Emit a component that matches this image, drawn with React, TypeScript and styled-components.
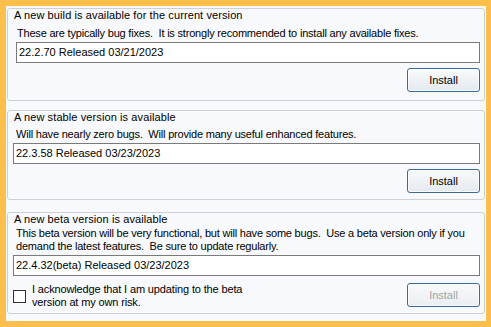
import React from 'react';
import styled, { createGlobalStyle } from 'styled-components';

const GlobalStyle = createGlobalStyle`
  html, body {
    margin: 0;
    padding: 0;
    background: #ffffff;
  }
  * {
    box-sizing: border-box;
  }
`;

interface Update {
  title: string;
  description: string;
  version: string;
  height: number;
  gapTop: number;
  descGap: number;
  wide?: boolean;
  beta?: boolean;
}

const updates: Update[] = [
  {
    title: 'A new build is available for the current version',
    description:
      'These are typically bug fixes.  It is strongly recommended to install any available fixes.',
    version: '22.2.70 Released 03/21/2023',
    height: 93,
    gapTop: 2,
    descGap: 5,
    wide: true,
  },
  {
    title: 'A new stable version is available',
    description: 'Will have nearly zero bugs.  Will provide many useful enhanced features.',
    version: '22.3.58 Released 03/23/2023',
    height: 90,
    gapTop: 9,
    descGap: 4,
  },
  {
    title: 'A new beta version is available',
    description:
      'This beta version will be very functional, but will have some bugs.  Use a beta version only if you\ndemand the latest features.  Be sure to update regularly.',
    version: '22.4.32(beta) Released 03/23/2023',
    height: 102,
    gapTop: 12,
    descGap: 1,
    beta: true,
  },
];

function UpdateBox({ item }: { item: Update }) {
  return (
    <GroupBox $height={item.height} $gapTop={item.gapTop}>
      <Title>{item.title}</Title>
      <Description $gap={item.descGap} $wide={item.wide}>
        {item.description}
      </Description>
      <VersionField $wide={item.wide}>{item.version}</VersionField>
      <ActionRow $gap={item.beta ? 7 : 5}>
        {item.beta && (
          <Acknowledge>
            <CheckBox />
            <CheckLabel>
              I acknowledge that I am updating to the beta
              <br />
              version at my own risk.
            </CheckLabel>
          </Acknowledge>
        )}
        <InstallButton disabled={item.beta}>Install</InstallButton>
      </ActionRow>
    </GroupBox>
  );
}

export default function App() {
  return (
    <>
      <GlobalStyle />
      <Frame>
        {updates.map((u) => (
          <UpdateBox key={u.title} item={u} />
        ))}
      </Frame>
    </>
  );
}

const Frame = styled.div`
  width: 491px;
  height: 327px;
  border: 6px solid #fdbf4c;
  border-right-width: 5px;
  background: #f7f9fc;
  display: flex;
  flex-direction: column;
  padding: 0 1px 0 1px;
  font-family: 'Liberation Sans', Arial, sans-serif;
  font-size: 11px;
  color: #000;
`;

const GroupBox = styled.section<{ $height: number; $gapTop: number }>`
  height: ${({ $height }) => $height}px;
  margin-top: ${({ $gapTop }) => $gapTop}px;
  border: 1px solid #cdd1d6;
  border-radius: 3px;
  padding: 0 4px 0 0;
  display: flex;
  flex-direction: column;
`;

const Title = styled.div`
  line-height: 13px;
  padding-left: 6px;
  letter-spacing: 0.1px;
`;

const Description = styled.div<{ $gap: number; $wide?: boolean }>`
  margin-top: ${({ $gap }) => $gap}px;
  line-height: 13px;
  padding-left: ${({ $wide }) => ($wide ? 9 : 8)}px;
  white-space: pre;
  letter-spacing: -0.2px;
`;

const VersionField = styled.div<{ $wide?: boolean }>`
  margin: 2px 0 0 ${({ $wide }) => ($wide ? 8 : 5)}px;
  height: 21px;
  border: 1px solid #7a7a7a;
  background: #ffffff;
  padding: 0 2px;
  line-height: 19px;
`;

const ActionRow = styled.div<{ $gap: number }>`
  display: flex;
  align-items: flex-start;
  margin-top: ${({ $gap }) => $gap}px;
`;

const Acknowledge = styled.label`
  display: flex;
  align-items: center;
  padding-left: 5px;
`;

const CheckBox = styled.span`
  width: 13px;
  height: 13px;
  border: 1px solid #333333;
  background: #ffffff;
  flex-shrink: 0;
`;

const CheckLabel = styled.span`
  margin-left: 6px;
  line-height: 13px;
  letter-spacing: -0.14px;
`;

const InstallButton = styled.button`
  margin-left: auto;
  width: 73px;
  height: 24px;
  border: 1px solid #3a6a98;
  border-radius: 3px;
  background: linear-gradient(#f9fbfc, #e4e9ee);
  box-shadow: inset 0 0 0 1px rgba(255, 255, 255, 0.7);
  font-family: inherit;
  font-size: 11px;
  color: #000;
  padding: 0;

  &:disabled {
    color: #a3a3a3;
    background: linear-gradient(#f8fafb, #eaeef1);
  }
`;
